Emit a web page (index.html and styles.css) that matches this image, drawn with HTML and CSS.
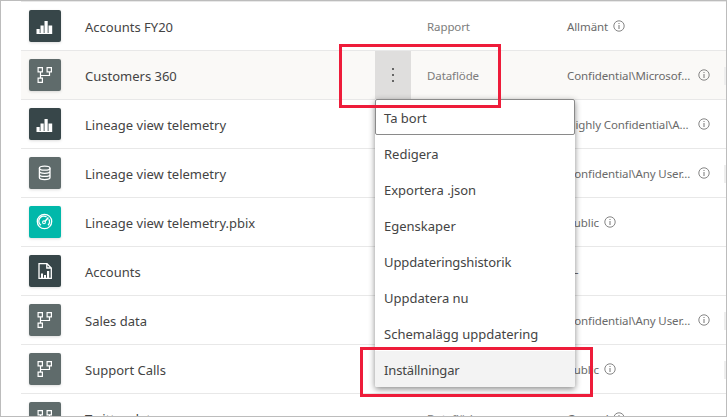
FILE: index.html
```
<!DOCTYPE html>
<html lang="sv">
<head>
<meta charset="utf-8">
<title>Arbetsyta</title>
<link rel="stylesheet" href="styles.css">
</head>
<body>
<svg class="defs" width="0" height="0">
  <symbol id="bars" viewBox="0 0 32 32"><path fill="#fff" d="M7.500 19h3.200v5H7.500zM11.500 15.500h3.200V24h-3.200zM15.500 11h3.200v13h-3.200zM19.500 15.500h3.700V24h-3.700zM7.500 23h15.500v1h-15.500z"/></symbol>
  <symbol id="flow" viewBox="0 0 32 32"><path fill="none" stroke="#fff" stroke-width="1.2" d="M9.100 8.600h4.300v4.300H9.100zM18.100 8.600h4.300v4.300h-4.300zM9.100 19.100h4.300v4.300H9.100zM11.500 13v6M11.500 16.500h9V13"/></symbol>
  <symbol id="data" viewBox="0 0 32 32"><g fill="none" stroke="#fff" stroke-width="1.300"><ellipse cx="15.700" cy="11.200" rx="5.300" ry="2"/><path d="M10.400 11.200v9.400c0 2.700 10.600 2.700 10.600 0v-9.400M10.400 14.300c0 2.700 10.600 2.700 10.600 0M10.400 17.400c0 2.700 10.600 2.700 10.600 0"/></g></symbol>
  <symbol id="gauge" viewBox="0 0 32 32"><g fill="none" stroke="#fff"><circle cx="15.500" cy="15.500" r="7.200" stroke-width="1.300"/><path stroke-width="1.300" d="M12 19.300a5 5 0 0 1 5.600-8.300M19.800 13.300a5 5 0 0 1-.8 6"/><circle cx="15" cy="16.300" r="1.400" stroke-width="1.100"/><path stroke-width="1.500" d="M15.900 15.400l3.500-4"/></g></symbol>
  <symbol id="paper" viewBox="0 0 32 32"><path fill="none" stroke="#fff" stroke-width="1.300" d="M10 8.700h8l4.300 4.300v10.400H10zM17.800 8.700V13h4.500"/><path fill="#fff" d="M12 18.500h2V23h-2zM15 20h2v3h-2zM18 16h2.200v7H18z"/></symbol>
  <symbol id="info" viewBox="0 0 12 12"><circle cx="6" cy="6" r="5.200" fill="none" stroke="#777" stroke-width=".9"/><path fill="#777" d="M5.500 5h1v4h-1zM5.500 3h1v1h-1z"/></symbol>
</svg>
<main class="frame">
  <div class="list">
    <div class="row"><svg class="tile dark"><use href="#bars"/></svg><span class="name">Accounts FY20</span><span class="more"></span><span class="type">Rapport</span><span class="label">Allmänt</span><svg class="info"><use href="#info"/></svg></div>
    <div class="row active"><svg class="tile"><use href="#flow"/></svg><span class="name">Customers 360</span><span class="more open"><i></i><i></i><i></i></span><span class="type">Dataflöde</span><span class="label long">Confidential\Microsof...</span><svg class="info"><use href="#info"/></svg><b class="edge"></b></div>
    <div class="row"><svg class="tile dark"><use href="#bars"/></svg><span class="name">Lineage view telemetry</span><span class="more"></span><span class="type"></span><span class="label long">Highly Confidential\A...</span><svg class="info"><use href="#info"/></svg></div>
    <div class="row"><svg class="tile"><use href="#data"/></svg><span class="name">Lineage view telemetry</span><span class="more"></span><span class="type"></span><span class="label long">Confidential\Any User...</span><svg class="info"><use href="#info"/></svg><b class="edge"></b></div>
    <div class="row"><svg class="tile teal"><use href="#gauge"/></svg><span class="name">Lineage view telemetry.pbix</span><span class="more"></span><span class="type"></span><span class="label public">Public</span><svg class="info"><use href="#info"/></svg></div>
    <div class="row"><svg class="tile dark"><use href="#paper"/></svg><span class="name">Accounts</span><span class="more"></span><span class="type"></span><span class="label">—</span></div>
    <div class="row"><svg class="tile"><use href="#flow"/></svg><span class="name">Sales data</span><span class="more"></span><span class="type"></span><span class="label long">Confidential\Any User...</span><svg class="info"><use href="#info"/></svg><b class="edge"></b></div>
    <div class="row"><svg class="tile"><use href="#flow"/></svg><span class="name">Support Calls</span><span class="more"></span><span class="type"></span><span class="label public">Public</span><svg class="info"><use href="#info"/></svg><b class="edge"></b></div>
    <div class="row"><svg class="tile"><use href="#flow"/></svg><span class="name">Twitter data</span><span class="more"></span><span class="type">Dataflöde</span><span class="label">General</span><svg class="info"><use href="#info"/></svg></div>
  </div>
</main>
<nav class="menu">
  <a class="focus">Ta bort</a><a>Redigera</a><a>Exportera .json</a><a>Egenskaper</a><a class="tight">Uppdateringshistorik</a><a>Uppdatera nu</a><a>Schemalägg uppdatering</a><a class="hover">Inställningar</a>
</nav>
<div class="mark mark-top"></div>
<div class="mark mark-bottom"></div>
</body>
</html>
```
FILE: styles.css
```
* { box-sizing: border-box; }
body { margin: 0; background: #fff; font-family: "Noto Sans", "Open Sans", sans-serif; color: #444; }
.defs { position: absolute; }
.frame { width: 727px; height: 417px; border: 1px solid #bcbcbc; overflow: hidden; padding-left: 20px; }
.row { position: relative; display: flex; align-items: center; height: 49px; padding-left: 8px; border-top: 1px solid #e8e8e8; }
.active { background: #faf9f7; }
.tile { flex: none; width: 32px; height: 32px; border-radius: 2px; background: #5f6b6b; box-shadow: 0 1px 3px #0002; }
.dark { background: #374649; }
.teal { background: #01b8aa; }
.name { flex: none; width: 290px; margin-left: 24px; font-size: 13px; line-height: 20px; padding-top: 2px; white-space: nowrap; }
.more { flex: none; width: 36px; height: 48px; display: flex; flex-direction: column; align-items: center; justify-content: center; gap: 4px; }
.open { background: #dfdedd; }
.more i { width: 2px; height: 2px; background: #666; }
.type { flex: none; width: 156px; padding-left: 16px; font-size: 11.5px; letter-spacing: -.1px; color: #7c7c7c; white-space: nowrap; }
.label { flex: none; font-size: 11.5px; letter-spacing: -.1px; color: #6a6a6a; width: 46px; white-space: nowrap; }
.long { width: 131px; }
.public { width: 37px; }
.info { flex: none; width: 12px; height: 12px; }
.edge { position: absolute; right: 0; top: 16px; width: 2px; height: 18px; background: #eee; }
.menu { position: absolute; left: 375px; top: 99px; width: 200px; height: 288px; background: #fff; border-radius: 2px; box-shadow: 0 2px 6px #0007; }
.menu a { display: flex; align-items: center; height: 36px; padding: 2px 0 0 9px; font-size: 13px; color: #444; white-space: nowrap; }
.menu .focus { border: 1px solid #8a8a8a; border-radius: 2px; padding-left: 8px; }
.menu .tight { letter-spacing: -.12px; }
.menu .hover { background: #f3f3f3; border-radius: 0 0 2px 2px; letter-spacing: -.15px; }
.mark { position: absolute; border: 3px solid #ee1c3a; }
.mark-top { left: 339px; top: 44px; width: 162px; height: 64px; }
.mark-bottom { left: 360px; top: 347px; width: 233px; height: 50px; }
```
